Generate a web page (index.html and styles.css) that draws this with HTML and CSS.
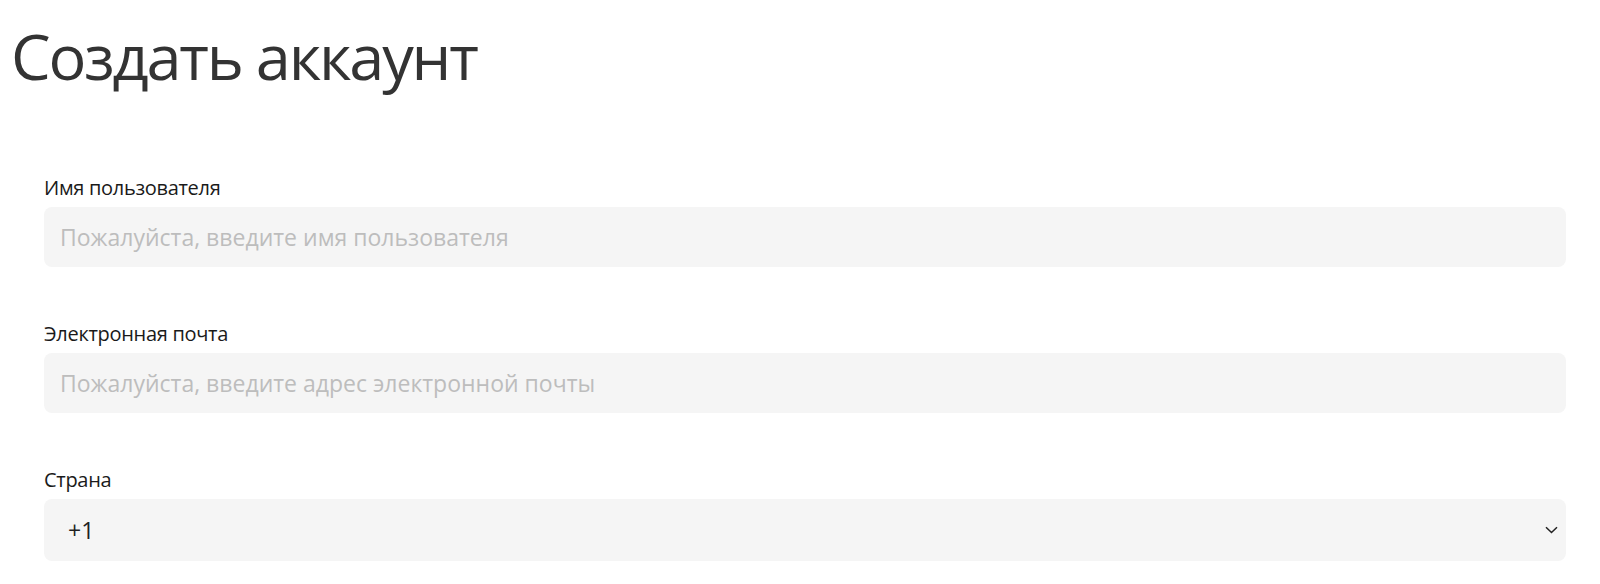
FILE: index.html
```html
<!DOCTYPE html>
<html lang="ru">
<head>
<meta charset="utf-8">
<title>Создать аккаунт</title>
<link rel="stylesheet" href="styles.css">
</head>
<body>
<main class="page">
  <h1 class="title">Создать аккаунт</h1>
  <form class="form">
    <div class="field">
      <label class="label" for="username">Имя пользователя</label>
      <input class="control" id="username" type="text" placeholder="Пожалуйста, введите имя пользователя">
    </div>
    <div class="field">
      <label class="label" for="email">Электронная почта</label>
      <input class="control" id="email" type="email" placeholder="Пожалуйста, введите адрес электронной почты">
    </div>
    <div class="field">
      <span class="label">Страна</span>
      <div class="control select" role="combobox" aria-expanded="false">
        <span class="select-value">+1</span>
        <svg class="chevron" width="13" height="8" viewBox="0 0 13 8" aria-hidden="true"><path d="M1 1.2l5.5 5.3 5.5-5.3" fill="none" stroke="#222" stroke-width="1.5"/></svg>
      </div>
    </div>
  </form>
</main>
</body>
</html>
```

FILE: styles.css
```css
html, body {
  margin: 0;
  padding: 0;
  background: #ffffff;
}

body {
  font-family: "Open Sans", "Noto Sans", sans-serif;
  color: #1f1f1f;
}

.page {
  display: flex;
  flex-direction: column;
}

.title {
  margin: 24px 0 0 11px;
  font-size: 63px;
  line-height: 63px;
  font-weight: 400;
  color: #333333;
  letter-spacing: -2.2px;
}

.form {
  display: flex;
  flex-direction: column;
  gap: 53px;
  padding: 87px 34px 0 44px;
}

.field {
  display: flex;
  flex-direction: column;
  gap: 5px;
}

.label {
  font-size: 20px;
  line-height: 28px;
  color: #1a1a1a;
  letter-spacing: -0.3px;
}

.control {
  box-sizing: border-box;
  height: 60px;
  width: 100%;
  border: none;
  outline: none;
  border-radius: 8px;
  background: #f5f5f5;
  padding: 0 16px;
  font-family: inherit;
  font-size: 23px;
  color: #1f1f1f;
}

.control::placeholder {
  color: #bdbdbd;
}

.select {
  display: flex;
  align-items: center;
  justify-content: space-between;
  height: 62px;
  padding: 0 8px 0 24px;
}

.select-value {
  font-size: 23px;
}

.chevron {
  display: block;
}
```
